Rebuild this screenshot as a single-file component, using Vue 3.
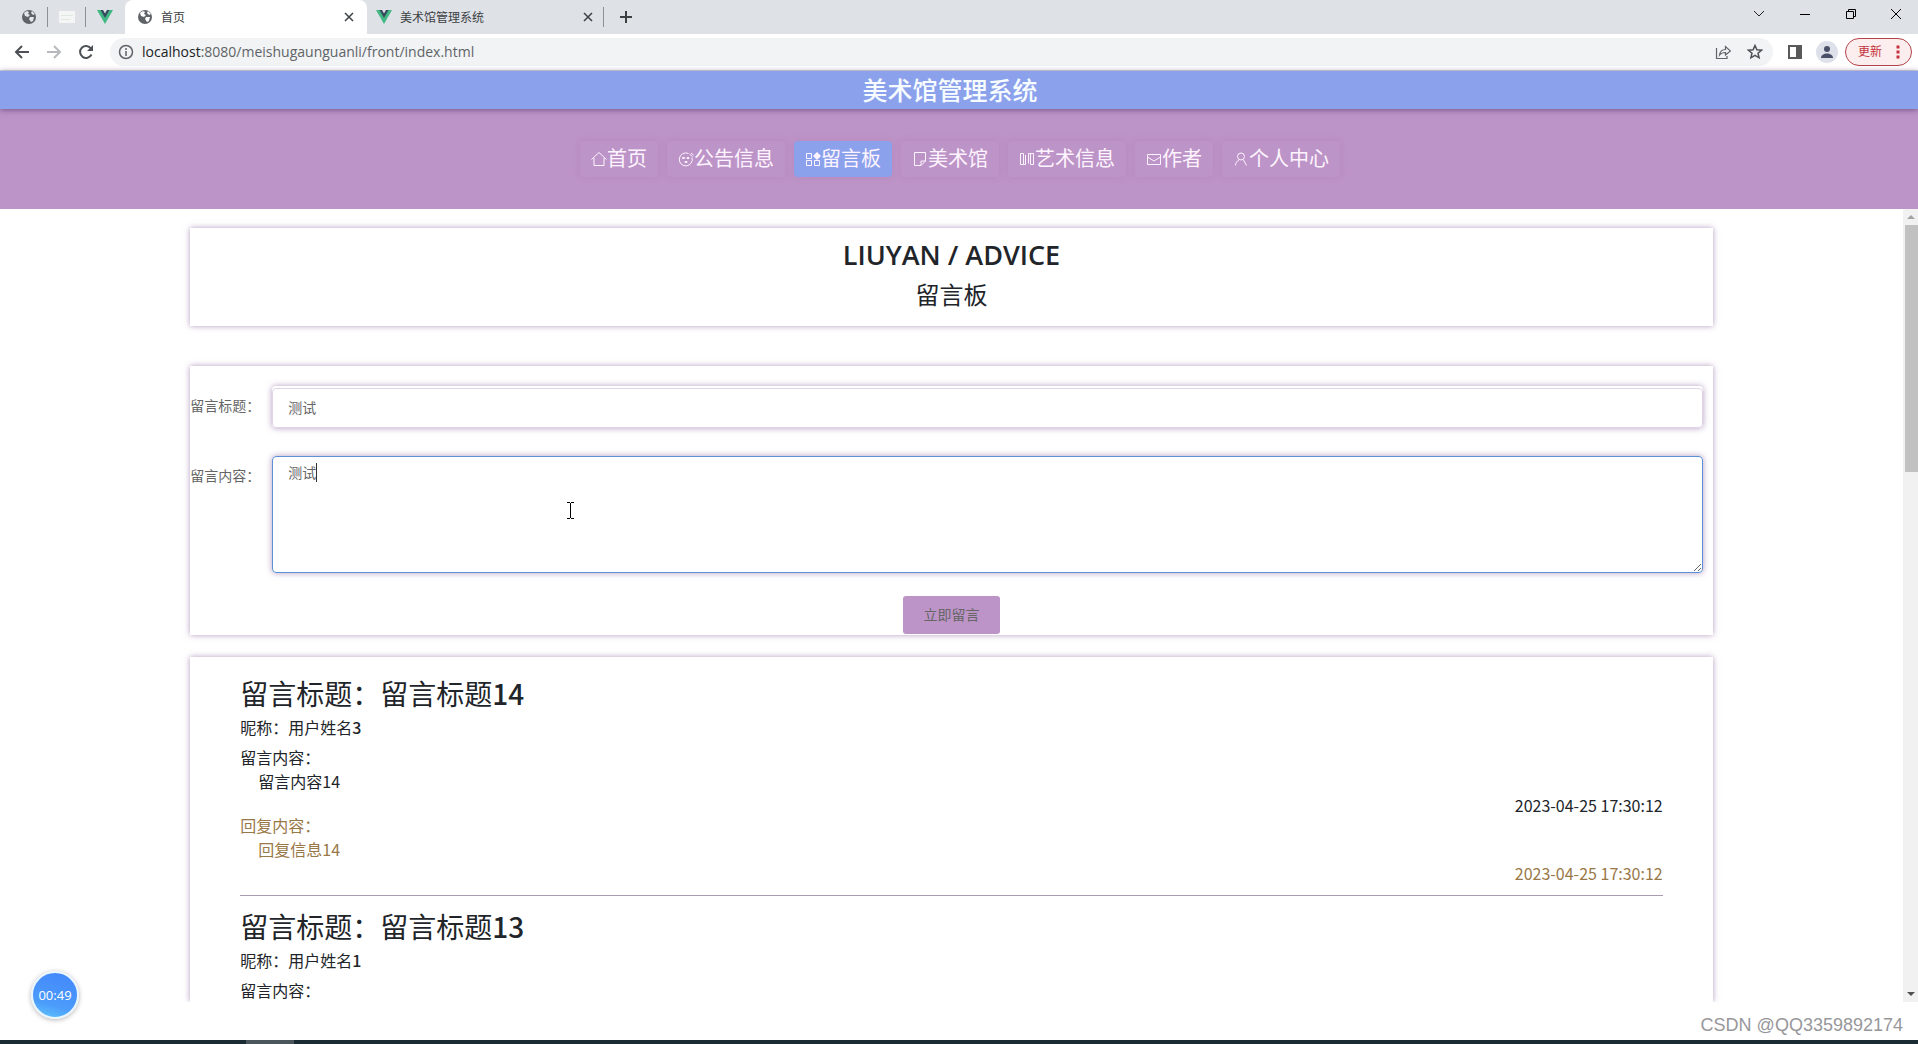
<script setup>
import { ref } from 'vue'

const title = ref('测试')
const content = ref('测试')

const navItems = [
  { label: '首页', icon: 'home' },
  { label: '公告信息', icon: 'face' },
  { label: '留言板', icon: 'grid', active: true },
  { label: '美术馆', icon: 'note' },
  { label: '艺术信息', icon: 'columns' },
  { label: '作者', icon: 'mail' },
  { label: '个人中心', icon: 'user' }
]

const icons = {
  home: 'M.5 8.500 8 1.500l7.500 7M3 7v7.500h10V7',
  face: 'M10.500 2.500a6.500 6.500 0 1 0 3.500 4M11.500 3l3 2.500M13 2l2.500 2M4.500 6.500h2v1h-2zM9 6.500h2v1H9zM7 10.500h2v1H7z',
  grid: 'M1.500 2.500h5v5h-5zM1.500 9.500h5v5h-5zM9.500 9.500h5v5h-5z',
  note: 'M2.500 1.500h11v8.500l-4.500 4.500M2.500 1.500v13H9V10h4.500',
  columns: 'M1.500 2.500h3v11h-3zM6.500 4v9.500M9.500 2.500v10M11.500 2.500h3v11h-3zM4.500 13.500h2M9.500 2.500h2',
  mail: 'M1.500 3.500h13v10h-13zM1.500 6l6.500 4 6.500-4',
  user: 'M8 2a3.500 3.500 0 1 0 0 7 3.500 3.500 0 0 0 0-7M2.500 14.500c0-2.500 1.500-4.500 3.500-5.500M13.500 14.500l-3-5.500'
}

const messages = [
  {
    id: 14,
    title: '留言标题',
    name: '用户姓名',
    user: 3,
    content: '留言内容14',
    reply: '回复信息14',
    time: '2023-04-25 17:30:12'
  },
  {
    id: 13,
    title: '留言标题',
    name: '用户姓名',
    user: 1
  }
]
</script>

<template>
  <div class="screen">
    <header class="browser">
      <div class="tabs">
        <button class="pinned" aria-label="网页">
          <svg width="16" height="16" viewBox="0 0 16 16"><circle cx="8" cy="8" r="7" fill="#5f6368" /><path d="M3 4c2-2 4-2 5-1l-1 2 2 1-2 2-3-1zM9 8l4 0-1 4-2 1-2-3zM11 2l3 3-2 1-2-2z" fill="#e4e7ea" /></svg>
        </button>
        <button class="pinned divided" aria-label="文档">
          <svg width="16" height="16" viewBox="0 0 16 16"><path fill="#f4f6f5" d="M0 2h16v12H0z" /><path stroke="#dfe8e3" d="M2 6.500h12M2 10.500h9" /></svg>
        </button>
        <button class="pinned divided" aria-label="Vue">
          <svg width="16" height="16" viewBox="0 0 16 16"><path fill="#41b883" d="M0 1h4l4 7 4-7h4L8 15z" /><path fill="#34495e" d="M3.500 1H6l2 3.500L10 1h2.500L8 9z" /></svg>
        </button>
        <div class="tab current">
          <svg width="16" height="16" viewBox="0 0 16 16"><circle cx="8" cy="8" r="7" fill="#5f6368" /><path d="M3 4c2-2 4-2 5-1l-1 2 2 1-2 2-3-1zM9 8l4 0-1 4-2 1-2-3zM11 2l3 3-2 1-2-2z" fill="#fff" /></svg>
          <span class="tab-title">首页</span>
          <button class="tab-close" aria-label="关闭标签页"><svg width="10" height="10" viewBox="0 0 10 10"><path d="M1 1l8 8M9 1 1 9" stroke="#3c4043" stroke-width="1.500" /></svg></button>
        </div>
        <div class="tab">
          <svg width="16" height="16" viewBox="0 0 16 16"><path fill="#41b883" d="M0 1h4l4 7 4-7h4L8 15z" /><path fill="#34495e" d="M3.500 1H6l2 3.500L10 1h2.500L8 9z" /></svg>
          <span class="tab-title">美术馆管理系统</span>
          <button class="tab-close" aria-label="关闭标签页"><svg width="10" height="10" viewBox="0 0 10 10"><path d="M1 1l8 8M9 1 1 9" stroke="#3c4043" stroke-width="1.500" /></svg></button>
        </div>
        <button class="new-tab divided" aria-label="新标签页"><svg width="12" height="12" viewBox="0 0 12 12"><path d="M6 0v12M0 6h12" stroke="#3c4043" stroke-width="2" /></svg></button>
        <div class="window-buttons">
          <button aria-label="搜索标签页"><svg width="12" height="12" viewBox="0 0 12 12"><path d="m1 3 5 5 5-5" fill="none" stroke="#222" /></svg></button>
          <button aria-label="最小化"><svg width="12" height="12" viewBox="0 0 12 12"><path d="M1 6.500h10" stroke="#000" /></svg></button>
          <button aria-label="还原"><svg width="12" height="12" viewBox="0 0 12 12"><path d="M1.500 3.500h7v7h-7zM3.500 3.500v-2h7v7h-2" fill="none" stroke="#000" /></svg></button>
          <button aria-label="关闭"><svg width="12" height="12" viewBox="0 0 12 12"><path d="m1 1 10 10M11 1 1 11" stroke="#000" /></svg></button>
        </div>
      </div>

      <div class="toolbar">
        <button class="tool" aria-label="后退"><svg width="16" height="16" viewBox="0 0 16 16"><path d="M15 8H2M8 2 2 8l6 6" fill="none" stroke="#4d5156" stroke-width="2" /></svg></button>
        <button class="tool" aria-label="前进"><svg width="16" height="16" viewBox="0 0 16 16"><path d="M1 8h13M8 2l6 6-6 6" fill="none" stroke="#b8babd" stroke-width="2" /></svg></button>
        <button class="tool" aria-label="刷新"><svg width="16" height="16" viewBox="0 0 16 16"><path d="M13.500 10.500A6 6 0 1 1 13 4.500" fill="none" stroke="#4d5156" stroke-width="2" /><path fill="#4d5156" d="M15 1v6H9z" /></svg></button>
        <div class="address">
          <svg width="16" height="16" viewBox="0 0 16 16"><circle cx="8" cy="8" r="6.500" fill="none" stroke="#5f6368" stroke-width="1.500" /><path d="M8 7v5M8 4v2" stroke="#5f6368" stroke-width="1.500" /></svg>
          <span class="url"><span class="host">localhost</span>:8080/meishugaunguanli/front/index.html</span>
          <button class="address-tool" aria-label="分享"><svg width="16" height="16" viewBox="0 0 16 16"><path d="M1.500 4v10.500H12V12M4.500 11c.5-4 3-5.500 6-5.500V2.500L15.500 7l-5 4V8.500c-3 0-4.500.5-6 2.500z" fill="none" stroke="#5f6368" stroke-width="1.200" /></svg></button>
          <button class="address-tool" aria-label="收藏"><svg width="16" height="16" viewBox="0 0 16 16"><path d="m8 1.500 1.900 4.300 4.600.4-3.500 3 1.100 4.600L8 11.400l-4.100 2.400L5 9.200l-3.500-3 4.600-.4z" fill="none" stroke="#4d5156" stroke-width="1.500" /></svg></button>
        </div>
        <button class="tool" aria-label="侧边栏"><svg width="14" height="14" viewBox="0 0 14 14"><path d="M1 1h12v12H1z" fill="#fff" stroke="#5a5a5a" stroke-width="2" /><path d="M8 1h5v12H8z" fill="#5a5a5a" /></svg></button>
        <button class="avatar" aria-label="用户"><svg width="22" height="22" viewBox="0 0 22 22"><circle cx="11" cy="8" r="3" fill="#4a5068" /><path d="M5 17c0-6 12-6 12 0z" fill="#4a5068" /></svg></button>
        <button class="update">更新<svg width="4" height="14" viewBox="0 0 4 14"><path d="M.5.500h3v3h-3zM.5 5.500h3v3h-3zM.5 10.500h3v3h-3z" fill="#c5323c" /></svg></button>
      </div>
    </header>

    <h1 class="site-title">美术馆管理系统</h1>

    <nav class="site-nav">
      <a v-for="item in navItems" :key="item.label" href="#" :class="{ active: item.active }">
        <svg width="16" height="16" viewBox="0 0 16 16">
          <path :d="icons[item.icon]" fill="none" stroke="currentColor" />
          <path v-if="item.active" d="m12 1 4 4-4 4-4-4z" fill="currentColor" />
        </svg>{{ item.label }}
      </a>
    </nav>

    <div class="viewport">
      <main class="content">
        <section class="card heading">
          <h2>LIUYAN / ADVICE</h2>
          <p>留言板</p>
        </section>

        <form class="card form" @submit.prevent>
          <div class="row">
            <label for="message-title">留言标题：</label>
            <div class="field title-field">
              <input id="message-title" v-model="title" type="text">
            </div>
          </div>
          <div class="row">
            <label for="message-content">留言内容：</label>
            <div class="field">
              <textarea id="message-content" v-model="content"></textarea>
              <span class="caret"></span>
            </div>
          </div>
          <button class="submit" type="submit">立即留言</button>
        </form>

        <section class="card list">
          <article v-for="m in messages" :key="m.id">
            <h3>留言标题：{{ m.title }}<b>{{ m.id }}</b></h3>
            <h4>昵称：{{ m.name }}<b>{{ m.user }}</b></h4>
            <p>留言内容：</p>
            <template v-if="m.content">
              <p class="indent">{{ m.content }}</p>
              <p class="time">{{ m.time }}</p>
            </template>
            <div v-if="m.reply" class="reply">
              <p class="reply-label">回复内容：</p>
              <p class="indent">{{ m.reply }}</p>
              <p class="time">{{ m.time }}</p>
            </div>
          </article>
        </section>
      </main>

      <div class="scrollbar">
        <svg width="14" height="16" viewBox="0 0 14 16"><path d="m3 10 4-4 4 4z" fill="#a3a3a3" /></svg>
        <div class="track"><div class="thumb"></div></div>
        <svg width="14" height="16" viewBox="0 0 14 16"><path d="m3 6 4 4 4-4z" fill="#505050" /></svg>
      </div>
    </div>

    <footer class="credit">CSDN @QQ3359892174</footer>
    <div class="taskbar"><span></span></div>

    <div class="timer">00:49</div>
    <svg class="pointer" width="9" height="17" viewBox="0 0 9 17"><path d="M1 .5h3M5 .5h3M4.500 1v15M1 16.500h3M5 16.500h3" stroke="#000" /></svg>
  </div>
</template>

<style>
body {
  background: #fff;
}
</style>

<style scoped>
* {
  box-sizing: border-box;
}

.screen {
  position: relative;
  display: flex;
  flex-direction: column;
  height: 100vh;
  overflow: hidden;
  font-family: "Open Sans", "Noto Sans CJK SC", sans-serif;
  font-size: 16px;
  line-height: 24px;
  color: #212529;
}

h1, h2, h3, h4, p {
  margin: 0;
  font-weight: 400;
}

button {
  margin: 0;
  padding: 0;
  border: 0;
  background: none;
  font: inherit;
  color: inherit;
}

svg {
  flex: none;
  display: block;
}

/* browser window */
.browser {
  flex: none;
  border-bottom: 1px solid #d5d9e4;
}

.tabs {
  display: flex;
  align-items: center;
  height: 34px;
  padding-left: 9px;
  background: #dee1e6;
  font-size: 12px;
  line-height: 16px;
  color: #3c4043;
}

.pinned {
  display: flex;
  justify-content: center;
  align-items: center;
  width: 38px;
  height: 20px;
  border-left: 1px solid transparent;
}

.pinned.divided,
.new-tab.divided {
  border-left: 1px solid #8d9196;
}

.tab {
  display: flex;
  align-items: center;
  gap: 8px;
  width: 236px;
  height: 34px;
  padding: 0 10px 0 9px;
}

.tab.current {
  width: 242px;
  margin-left: 2px;
  padding: 0 13px 0 12px;
  border-radius: 8px 8px 0 0;
  background: #fff;
}

.tab-title {
  flex: 1;
  padding-top: 2px;
}

.new-tab {
  display: flex;
  align-items: center;
  width: 46px;
  height: 20px;
  padding-left: 16px;
}

.window-buttons {
  display: flex;
  align-self: flex-start;
  margin-left: auto;
}

.window-buttons button {
  display: flex;
  justify-content: center;
  align-items: center;
  width: 46px;
  height: 28px;
}

.window-buttons button:last-child {
  width: 44px;
}

.toolbar {
  display: flex;
  align-items: center;
  height: 36px;
  padding: 0 6px;
  background: #fff;
}

.tool {
  display: flex;
  justify-content: center;
  width: 32px;
}

.address {
  flex: 1;
  display: flex;
  align-items: center;
  height: 28px;
  margin: 0 6px 0 8px;
  padding: 0 6px 0 8px;
  border-radius: 14px;
  background: #f1f3f4;
}

.url {
  flex: 1;
  margin-left: 8px;
  font-size: 14px;
  color: #5f6368;
}

.host {
  color: #202124;
}

.address-tool {
  display: flex;
  justify-content: center;
  width: 32px;
}

.address-tool:last-child {
  width: 24px;
  margin-left: 4px;
}

.avatar {
  margin: 0 7px 0 5px;
  border-radius: 50%;
  background: #dfe1ea;
}

.update {
  display: flex;
  justify-content: space-between;
  align-items: center;
  width: 67px;
  height: 28px;
  padding: 0 11px 0 12px;
  border: 1px solid #b3424a;
  border-radius: 14px;
  background: #fceeee;
  font-size: 12px;
  color: #c5323c;
}

/* site header */
.site-title {
  flex: none;
  position: relative;
  padding-right: 18px;
  background: #8ca1ec;
  box-shadow: 0 1px 6px rgba(70, 40, 90, 0.6);
  font-size: 25px;
  line-height: 38px;
  font-weight: 500;
  text-align: center;
  color: #f6fcff;
}

.site-nav {
  flex: none;
  display: flex;
  justify-content: center;
  align-items: center;
  gap: 9px;
  height: 100px;
  padding-left: 2px;
  background: #bd94c7;
}

.site-nav a {
  display: flex;
  align-items: center;
  height: 36px;
  padding: 0 11px;
  border-radius: 4px;
  box-shadow: 0 0 6px rgba(150, 100, 170, 0.25);
  font-size: 20px;
  text-decoration: none;
  color: #fdf4ff;
}

.site-nav a.active {
  background: #8ca1ec;
}

/* scrolling page */
.viewport {
  flex: 1;
  display: flex;
  min-height: 0;
  overflow: hidden;
}

.content {
  flex: 1;
  display: flex;
  flex-direction: column;
  align-items: center;
  padding-top: 19px;
}

.card {
  flex: none;
  width: 80%;
  background: #fff;
  box-shadow: 0 0 6px rgba(130, 90, 150, 0.6);
}

.heading {
  height: 98px;
  padding-top: 10px;
  text-align: center;
}

.heading h2 {
  font-size: 27px;
  line-height: 34px;
  font-weight: 600;
}

.heading p {
  margin-top: 5px;
  font-size: 24px;
  line-height: 36px;
}

.form {
  margin-top: 40px;
  padding: 20px 0 1px;
  font-size: 14px;
  line-height: 20px;
  color: #666;
}

.row {
  display: flex;
  padding-right: 10px;
}

.row + .row {
  margin-top: 28px;
}

.row label {
  width: 82px;
  line-height: 40px;
}

.field {
  flex: 1;
  position: relative;
  display: flex;
  border-radius: 4px;
  box-shadow: 0 0 6px rgba(130, 90, 150, 0.6);
}

.title-field {
  padding-top: 2px;
}

.field input,
.field textarea {
  flex: 1;
  min-width: 0;
  margin: 0;
  padding: 0 15px 2px;
  border: 1px solid #e0d4e6;
  border-radius: 4px;
  outline: none;
  background: #fff;
  font: inherit;
  color: #666;
}

.field input {
  height: 40px;
}

.field textarea {
  height: 117px;
  padding: 6px 15px;
  border-color: #5b8fd6;
  resize: vertical;
}

.caret {
  position: absolute;
  top: 7px;
  left: 44px;
  width: 1px;
  height: 19px;
  background: #333;
}

.submit {
  display: block;
  width: 97px;
  height: 38px;
  margin: 23px auto 0;
  border-radius: 3px;
  background: #bd94c7;
}

.list {
  flex: 1 0 auto;
  margin-top: 22px;
  padding: 19px 50px 0;
  font-family: "Noto Sans CJK SC", sans-serif;
}

.list article + article {
  margin-top: 10px;
  padding-top: 13px;
  border-top: 1px solid #aa9bb0;
}

.list b {
  font-weight: 500;
}

.list h3 {
  font-size: 28px;
  line-height: 34px;
}

.list h4 {
  margin: 8px 0;
  font-size: 16px;
  line-height: 19px;
}

.indent {
  padding-left: 18px;
}

.time {
  text-align: right;
}

.reply {
  color: #997848;
}

.list .reply-label {
  margin-bottom: 4px;
  line-height: 16px;
}

/* scrollbar */
.scrollbar {
  flex: none;
  display: flex;
  flex-direction: column;
  width: 15px;
  padding-left: 1px;
  background: #f1f1f1;
}

.track {
  flex: 1;
}

.thumb {
  height: 32.5%;
  margin-left: 1px;
  background: #c1c1c1;
}

/* bottom strip */
.credit {
  flex: none;
  height: 38px;
  padding-right: 15px;
  font-family: "Liberation Sans", sans-serif;
  font-size: 18px;
  line-height: 46px;
  text-align: right;
  color: #97979b;
}

.taskbar {
  flex: none;
  height: 4px;
  padding-left: 246px;
  background: #1b2b33;
}

.taskbar span {
  display: block;
  width: 48px;
  height: 4px;
  background: #4a565c;
}

/* overlays */
.timer {
  position: absolute;
  left: 31px;
  bottom: 25px;
  width: 48px;
  height: 48px;
  border: 2px solid #eaf6ff;
  border-radius: 50%;
  background: linear-gradient(15deg, #5cc0fb 5%, #4c9cfb 30%, #4286fa);
  box-shadow: 0 1px 5px rgba(0, 0, 0, 0.3);
  font-size: 13px;
  line-height: 44px;
  text-align: center;
  color: #fff;
}

.pointer {
  position: absolute;
  top: 502px;
  left: 566px;
}
</style>
